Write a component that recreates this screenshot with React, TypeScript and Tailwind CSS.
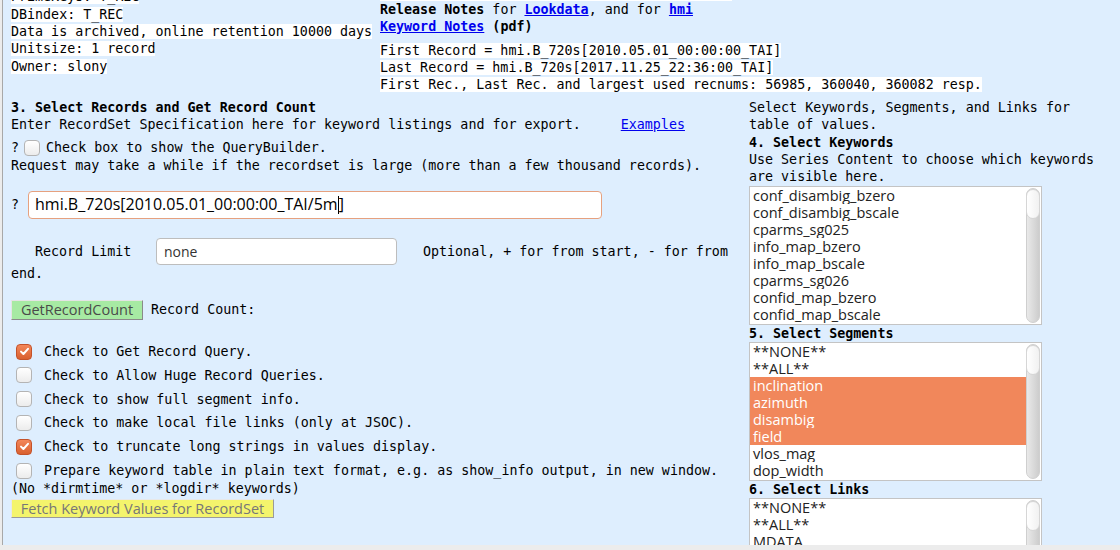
import React from 'react';

const mono = "font-['DejaVu_Sans_Mono',monospace] text-[13.33px] leading-[17.3px]";
const sans = "font-['Open_Sans',sans-serif]";

const Check: React.FC<{ on?: boolean }> = ({ on }) =>
  on ? (
    <span className="inline-flex h-[16px] w-[16px] shrink-0 items-center justify-center rounded-[4px] border border-[#c4522a] bg-[linear-gradient(#f3875a,#d9602f)]">
      <svg width="11" height="11" viewBox="0 0 11 11">
        <path d="M2 5.6 L4.4 8 L9 2.8" fill="none" stroke="#fff" strokeWidth="2" strokeLinecap="round" strokeLinejoin="round" />
      </svg>
    </span>
  ) : (
    <span className="inline-block h-[16px] w-[16px] shrink-0 rounded-[4px] border border-[#b4b4b4] bg-[linear-gradient(#ffffff,#ececec)]" />
  );

const ListBox: React.FC<{ items: string[]; selected?: string[]; h: string }> = ({ items, selected = [], h }) => (
  <div className={`flex w-[293px] overflow-hidden border border-[#c4c4c4] bg-white ${h}`}>
    <div className={`flex-1 ${sans} text-[14.5px] leading-[17px]`}>
      {items.map((it) => {
        const sel = selected.includes(it);
        return (
          <div key={it} className={`h-[17px] overflow-hidden whitespace-nowrap px-[3px] ${sel ? 'bg-[#f1875b] text-white' : 'text-[#222]'}`}>
            {it}
          </div>
        );
      })}
    </div>
    <div className="relative w-[15px] shrink-0 py-[1px] pr-[1px]">
      <div className="h-full w-full rounded-[7px] border border-[#cfcfcf] bg-[linear-gradient(to_right,#e9e9e9,#cdcdcd)]" />
      <div className="absolute left-0 top-[2px] h-[30px] w-[14px] rounded-[7px] border border-[#d6d6d6] bg-[linear-gradient(to_right,#ffffff,#f1f1f1)]" />
    </div>
  </div>
);

const CheckRow: React.FC<{ on?: boolean; text: string }> = ({ on, text }) => (
  <div className="flex h-[23.8px] items-center">
    <span className="ml-[5px] mr-[12px] flex"><Check on={on} /></span>
    <span>{text}</span>
  </div>
);

export default function App() {
  return (
    <div className="flex h-[550px] w-[1120px] flex-col overflow-hidden bg-[#ececec]">
      <div className="flex-1 overflow-hidden pl-[2px]">
        <div className={`h-full border-l border-[#a8a8a8] bg-[#deeefe] pl-[8px] text-black ${mono}`}>
          {/* top: series info */}
          <div className="flex">
            <div className="-mt-[11.65px] w-[369px]">
              <div><span className="bg-white">PrimeKeys: T_REC</span></div>
              <div><span className="bg-white">DBindex: T_REC</span></div>
              <div><span className="bg-white">Data is archived, online retention 10000 days</span></div>
              <div><span className="bg-white">Unitsize: 1 record</span></div>
              <div><span className="bg-white">Owner: slony</span></div>
            </div>
            <div>
              <div className="h-[1px] w-[352px] bg-white" />
              <div>
                <b>Release Notes</b> for <a className="font-bold text-[#0000ee] underline">Lookdata</a>, and for{' '}
                <a className="font-bold text-[#0000ee] underline">hmi</a>
              </div>
              <div>
                <a className="font-bold text-[#0000ee] underline">Keyword Notes</a> <b>(pdf)</b>
              </div>
              <div className="mt-[6px]"><span className="bg-white">First Record = hmi.B_720s[2010.05.01_00:00:00_TAI]</span></div>
              <div><span className="bg-white">Last Record = hmi.B_720s[2017.11.25_22:36:00_TAI]</span></div>
              <div><span className="bg-white">First Rec., Last Rec. and largest used recnums: 56985, 360040, 360082 resp.</span></div>
            </div>
          </div>

          {/* section 3 + right column */}
          <div className="mt-[5.7px] flex">
            <div className="w-[738px] shrink-0">
              <div className="font-bold">3. Select Records and Get Record Count</div>
              <div>
                Enter RecordSet Specification here for keyword listings and for export.
                <a className="ml-[40px] text-[#0000ee] underline">Examples</a>
              </div>
              <div className="mt-[5px] flex h-[18px] items-center">
                <span>?</span>
                <span className="ml-[5px] mr-[6px] flex"><Check /></span>
                <span>Check box to show the QueryBuilder.</span>
              </div>
              <div>Request may take a while if the recordset is large (more than a few thousand records).</div>

              <div className="mt-[17px] flex items-center">
                <span className="w-[17px]">?</span>
                <div className={`flex h-[28px] w-[574px] items-center rounded-[4px] border border-[#e6a17f] bg-white pl-[6px] ${sans} text-[16px]`}>
                  <span>hmi.B_720s[2010.05.01_00:00:00_TAI/5m</span>
                  <span className="h-[18px] w-[1px] bg-black" />
                  <span>]</span>
                </div>
              </div>

              <div className="mt-[19px] flex items-center">
                <span className="ml-[24px] w-[121px]">Record Limit</span>
                <div className={`flex h-[27px] w-[241px] items-center rounded-[4px] border border-[#bdbdbd] bg-white pl-[7px] ${sans} text-[14px] text-[#333]`}>
                  none
                </div>
                <span className="ml-[26px]">Optional, + for from start, - for from</span>
              </div>
              <div>end.</div>

              <div className="mt-[17.4px] flex items-center">
                <button className={`h-[20px] w-[132px] border border-b-[#8a8a8a] border-l-[#e4e4e4] border-r-[#8a8a8a] border-t-[#e4e4e4] bg-[#a7eaa3] ${sans} text-[14.5px] leading-[18px] text-[#4a4a4a]`}>
                  GetRecordCount
                </button>
                <span className="ml-[8px]">Record Count:</span>
              </div>

              <div className="mt-[20px]">
                <CheckRow on text="Check to Get Record Query." />
                <CheckRow text="Check to Allow Huge Record Queries." />
                <CheckRow text="Check to show full segment info." />
                <CheckRow text="Check to make local file links (only at JSOC)." />
                <CheckRow on text="Check to truncate long strings in values display." />
                <CheckRow text="Prepare keyword table in plain text format, e.g. as show_info output, in new window." />
              </div>
              <div className="-mt-[2.5px]">(No *dirmtime* or *logdir* keywords)</div>
              <button className={`mt-[1.5px] h-[19px] w-[263px] border border-b-[#9a9a9a] border-l-[#e8e8e8] border-r-[#9a9a9a] border-t-[#e8e8e8] bg-[#f4f46c] ${sans} text-[14.5px] leading-[17px] text-[#777]`}>
                Fetch Keyword Values for RecordSet
              </button>
            </div>

            <div className="w-[360px]">
              <div>Select Keywords, Segments, and Links for</div>
              <div>table of values.</div>
              <div className="font-bold">4. Select Keywords</div>
              <div>Use Series Content to choose which keywords</div>
              <div>are visible here.</div>
              <ListBox
                h="h-[139px]"
                items={[
                  'conf_disambig_bzero',
                  'conf_disambig_bscale',
                  'cparms_sg025',
                  'info_map_bzero',
                  'info_map_bscale',
                  'cparms_sg026',
                  'confid_map_bzero',
                  'confid_map_bscale',
                ]}
              />
              <div className="font-bold">5. Select Segments</div>
              <ListBox
                h="h-[139px]"
                items={['**NONE**', '**ALL**', 'inclination', 'azimuth', 'disambig', 'field', 'vlos_mag', 'dop_width']}
                selected={['inclination', 'azimuth', 'disambig', 'field']}
              />
              <div className="font-bold">6. Select Links</div>
              <ListBox h="h-[120px]" items={['**NONE**', '**ALL**', 'MDATA', 'LINK2']} />
            </div>
          </div>
        </div>
      </div>
      <div className="h-[5px] shrink-0 bg-[#ececec]" />
    </div>
  );
}
